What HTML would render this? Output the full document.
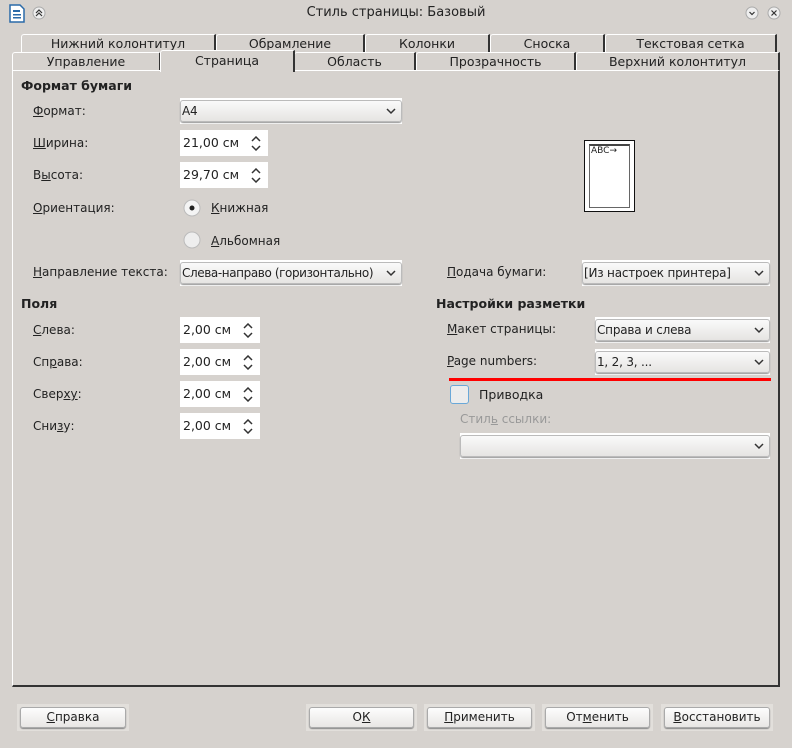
<!DOCTYPE html>
<html><head><meta charset="utf-8"><style>
*{box-sizing:border-box;margin:0;padding:0}
body{width:792px;height:748px;background:#d6d2ce;font-family:"DejaVu Sans","Liberation Sans",sans-serif;font-size:12px;color:#222;position:relative;overflow:hidden}
.a{position:absolute;white-space:nowrap}
.tab{position:absolute;height:19px;border-top:1px solid #fff;border-left:1px solid #fff;border-right:2px solid #333;border-top-left-radius:3px;text-align:center;line-height:17px;font-size:12.5px;background:#d6d2ce}
.panel{position:absolute;left:12px;top:70px;width:768px;height:617px;border-left:1px solid #fff;border-top:1px solid #fff;border-right:2px solid #333;border-bottom:2px solid #333}
.lbl{position:absolute;font-size:12px}
.b{font-weight:bold;font-size:12.5px}
.spin{position:absolute;background:#fff;height:26px;padding-left:3px;line-height:26px;font-size:12.5px}
.spin svg{position:absolute;right:7px;top:6px}
.dd{position:absolute;background:#fff;height:26px;padding:2px 0}
.dd div{height:22px;border:1px solid #bbb;border-radius:3px;background:linear-gradient(#fafafa,#e6e4e2);line-height:20px;padding-left:1px;font-size:12px;letter-spacing:-0.2px;box-shadow:0 1px 1px #999;position:relative;overflow:hidden;white-space:nowrap}
.dd svg{position:absolute;right:5px;top:7px}
.btn{position:absolute;top:704px;height:27px;background:#e2dfdb;padding:3px}
.btn div{height:21px;border:1px solid #aaa;border-radius:3px;background:linear-gradient(#fdfdfd,#e8e6e4);text-align:center;line-height:19px;font-size:12px;box-shadow:0 1px 1px #888}
u{text-decoration:underline}
</style></head><body>
<svg class="a" style="left:8px;top:4px" width="18" height="19"><path d="M2 1h10l4 4v13H2z" fill="#fff" stroke="#2a6aa8" stroke-width="1.5"/><rect x="5" y="6" width="7" height="2" fill="#2a6aa8"/><rect x="5" y="10" width="8" height="1.5" fill="#2a6aa8"/><rect x="5" y="13" width="8" height="1.5" fill="#2a6aa8"/></svg>
<svg class="a" style="left:32px;top:6px" width="14" height="14"><circle cx="7" cy="7" r="6" fill="#eee" stroke="#aaa"/><path d="M4 7l3-3 3 3M4 10l3-3 3 3" fill="none" stroke="#333" stroke-width="1.2"/></svg>
<div class="a" style="left:0;width:792px;top:5px;text-align:center;font-size:13px">Стиль страницы: Базовый</div>
<svg class="a" style="left:745px;top:6px" width="14" height="14"><circle cx="7" cy="7" r="6" fill="#eee" stroke="#aaa"/><path d="M4.5 6l2.5 2.5 2.5-2.5" fill="none" stroke="#333" stroke-width="1.2"/></svg>
<svg class="a" style="left:767px;top:6px" width="14" height="14"><circle cx="7" cy="7" r="6" fill="#eee" stroke="#aaa"/><path d="M4.5 4.5l5 5M9.5 4.5l-5 5" stroke="#333" stroke-width="1.2"/></svg>
<div class="tab" style="left:21px;top:34px;width:195px">Нижний колонтитул</div>
<div class="tab" style="left:216px;top:34px;width:149px">Обрамление</div>
<div class="tab" style="left:365px;top:34px;width:125px">Колонки</div>
<div class="tab" style="left:490px;top:34px;width:115px">Сноска</div>
<div class="tab" style="left:605px;top:34px;width:172px">Текстовая сетка</div>
<div class="tab" style="left:12px;top:52px;width:149px">Управление</div>
<div class="tab" style="left:294px;top:52px;width:122px">Область</div>
<div class="tab" style="left:416px;top:52px;width:160px">Прозрачность</div>
<div class="tab" style="left:576px;top:52px;width:204px">Верхний колонтитул</div>
<div class="panel"></div>
<div class="tab" style="left:160px;top:50px;width:135px;height:22px;border-bottom:none;z-index:2;line-height:20px">Страница</div>
<div class="lbl b" style="left:21px;top:78px">Формат бумаги</div>
<div class="lbl" style="left:33px;top:104px"><u>Ф</u>ормат:</div>
<div class="dd" style="left:180px;top:98px;width:222px"><div>A4<svg width="10" height="7"><path d="M1 1l4 4 4-4" fill="none" stroke="#333" stroke-width="1.5"/></svg></div></div>
<div class="lbl" style="left:33px;top:136px"><u>Ш</u>ирина:</div>
<div class="spin" style="left:180px;top:130px;width:88px">21,00 см<svg width="10" height="15"><path d="M1 5l4-4 4 4M1 10l4 4 4-4" fill="none" stroke="#333" stroke-width="1.5"/></svg></div>
<div class="lbl" style="left:33px;top:168px">В<u>ы</u>сота:</div>
<div class="spin" style="left:180px;top:162px;width:88px">29,70 см<svg width="10" height="15"><path d="M1 5l4-4 4 4M1 10l4 4 4-4" fill="none" stroke="#333" stroke-width="1.5"/></svg></div>
<div class="lbl" style="left:33px;top:201px"><u>О</u>риентация:</div>
<svg class="a" style="left:182px;top:198px" width="20" height="20"><circle cx="10" cy="10" r="8" fill="#f4f4f4" stroke="#bbb"/><circle cx="10" cy="10" r="2.5" fill="#222"/></svg>
<div class="lbl" style="left:211px;top:201px"><u>К</u>нижная</div>
<svg class="a" style="left:182px;top:230px" width="20" height="20"><circle cx="10" cy="10" r="8" fill="#eee" stroke="#bbb"/></svg>
<div class="lbl" style="left:211px;top:234px"><u>А</u>льбомная</div>
<div class="lbl" style="left:33px;top:265px"><u>Н</u>аправление текста:</div>
<div class="dd" style="left:180px;top:260px;width:222px"><div style="letter-spacing:-0.4px">Слева-направо (горизонтально)<svg width="10" height="7"><path d="M1 1l4 4 4-4" fill="none" stroke="#333" stroke-width="1.5"/></svg></div></div>
<div class="lbl b" style="left:21px;top:296px">Поля</div>
<div class="lbl" style="left:33px;top:323px"><u>С</u>лева:</div>
<div class="spin" style="left:180px;top:317px;width:80px">2,00 см<svg width="10" height="15"><path d="M1 5l4-4 4 4M1 10l4 4 4-4" fill="none" stroke="#333" stroke-width="1.5"/></svg></div>
<div class="lbl" style="left:33px;top:355px">Сп<u>р</u>ава:</div>
<div class="spin" style="left:180px;top:349px;width:80px">2,00 см<svg width="10" height="15"><path d="M1 5l4-4 4 4M1 10l4 4 4-4" fill="none" stroke="#333" stroke-width="1.5"/></svg></div>
<div class="lbl" style="left:33px;top:387px">Свер<u>ху</u>:</div>
<div class="spin" style="left:180px;top:381px;width:80px">2,00 см<svg width="10" height="15"><path d="M1 5l4-4 4 4M1 10l4 4 4-4" fill="none" stroke="#333" stroke-width="1.5"/></svg></div>
<div class="lbl" style="left:33px;top:419px">Сни<u>з</u>у:</div>
<div class="spin" style="left:180px;top:413px;width:80px">2,00 см<svg width="10" height="15"><path d="M1 5l4-4 4 4M1 10l4 4 4-4" fill="none" stroke="#333" stroke-width="1.5"/></svg></div>
<div class="a" style="left:584px;top:140px;width:51px;height:72px;border:1px solid #111;background:#fff"></div>
<div class="a" style="left:589px;top:144px;width:41px;height:64px;border:1px solid #666;border-top:2px solid #444;background:#fff;font-size:9px;line-height:10px;padding-left:1px">ABC→</div>
<div class="lbl" style="left:447px;top:265px"><u>П</u>одача бумаги:</div>
<div class="dd" style="left:582px;top:260px;width:188px"><div>[Из настроек принтера]<svg width="10" height="7"><path d="M1 1l4 4 4-4" fill="none" stroke="#333" stroke-width="1.5"/></svg></div></div>
<div class="lbl b" style="left:436px;top:296px">Настройки разметки</div>
<div class="lbl" style="left:447px;top:322px"><u>М</u>акет страницы:</div>
<div class="dd" style="left:595px;top:317px;width:175px"><div>Справа и слева<svg width="10" height="7"><path d="M1 1l4 4 4-4" fill="none" stroke="#333" stroke-width="1.5"/></svg></div></div>
<div class="lbl" style="left:447px;top:354px"><u>P</u>age numbers:</div>
<div class="dd" style="left:595px;top:349px;width:175px"><div>1, 2, 3, ...<svg width="10" height="7"><path d="M1 1l4 4 4-4" fill="none" stroke="#333" stroke-width="1.5"/></svg></div></div>
<div class="a" style="left:449px;top:378px;width:322px;height:3px;background:#f00"></div>
<div class="a" style="left:450px;top:385px;width:19px;height:19px;border:1px solid #6aa8d8;border-radius:3px;background:#ececec"></div>
<div class="lbl" style="left:479px;top:387px;font-size:12.5px">Приводка</div>
<div class="lbl" style="left:460px;top:412px;color:#999">Стил<u>ь</u> ссылки:</div>
<div class="dd" style="left:460px;top:433px;width:310px"><div><svg width="10" height="7"><path d="M1 1l4 4 4-4" fill="none" stroke="#333" stroke-width="1.5"/></svg></div></div>
<div class="btn" style="left:17px;width:112px"><div><u>С</u>правка</div></div>
<div class="btn" style="left:306px;width:111px"><div>О<u>К</u></div></div>
<div class="btn" style="left:424px;width:111px"><div><u>П</u>рименить</div></div>
<div class="btn" style="left:542px;width:111px"><div>От<u>м</u>енить</div></div>
<div class="btn" style="left:661px;width:112px"><div><u>В</u>осстановить</div></div>
</body></html>
